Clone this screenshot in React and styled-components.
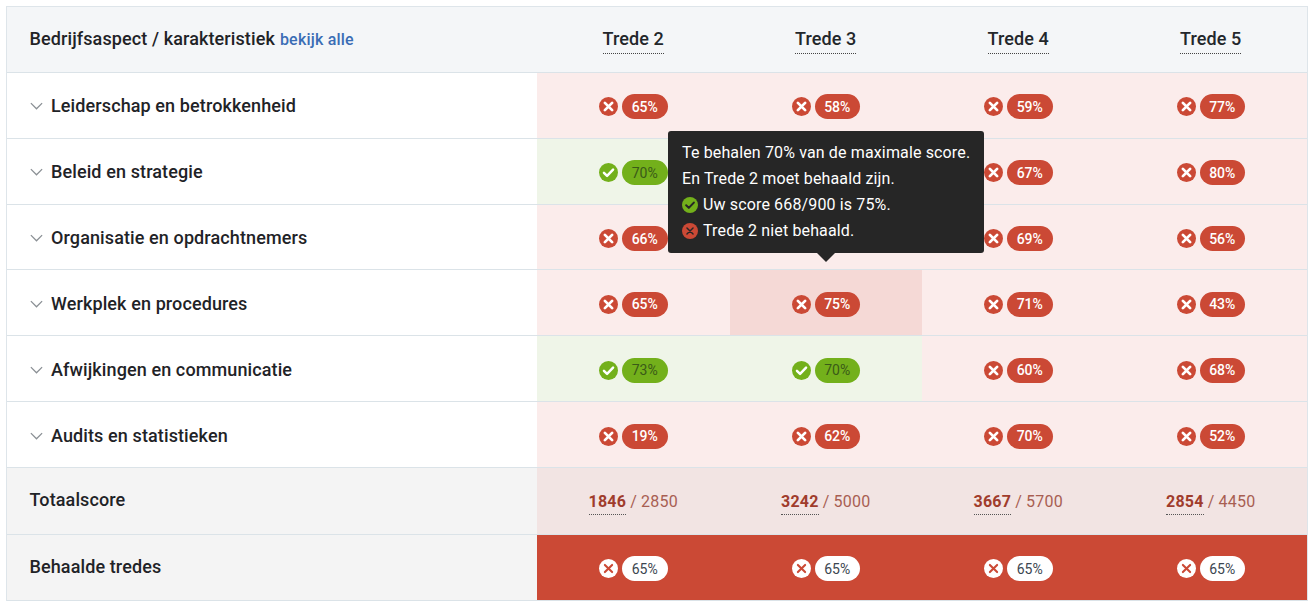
import React from "react";
import styled, { createGlobalStyle } from "styled-components";

const Global = createGlobalStyle`
  html, body { margin: 0; padding: 0; background: #fff; }
  body { font-family: Roboto, "Liberation Sans", sans-serif; color: #212529; }
`;
const Page = styled.div`
  width: 1314px; height: 608px; padding: 6px 6px 0; box-sizing: border-box; overflow: hidden;
`;
const Table = styled.div`
  width: 1302px; position: relative;
  border: 1px solid #dee5ea; border-bottom: 0; box-sizing: border-box;
  display: grid; grid-template-columns: 530px repeat(4, 192.5px);
`;
const Row = styled.div`
  display: contents;
`;
const Label = styled.div`
  height: ${p => p.$h}px; box-sizing: border-box; display: flex; align-items: center; gap: 7px;
  padding: ${p => p.$plain ? "0 0 2px 22.5px" : "1px 0 0 22px"};
  background: ${p => p.$bg || "#fff"};
  border-bottom: 1px solid #dbe3e8;
  font-size: 18px; font-weight: 500; color: #1f2327; letter-spacing: 0.11px; white-space: nowrap;
`;
const Link = styled.span`
  color: #3a6db5; font-size: 16px; font-weight: 500; letter-spacing: 0.2px; padding-top: 1px; margin-left: -2px;
`;
const Chevron = styled.svg`
  width: 15px; height: 15px; flex: none; stroke: #8a8f94; fill: none; stroke-width: 1.3;
`;
const Head = styled.div`
  height: ${p => p.$h}px; box-sizing: border-box; display: flex; align-items: center; justify-content: center;
  background: #f4f6f8; border-bottom: 1px solid #dbe3e8;
`;
const HeadTitle = styled.span`
  font-size: 18px; font-weight: 500; color: #23272b; line-height: 22px; letter-spacing: 0.1px;
  border-bottom: 1px dotted #444; padding-bottom: 3px; margin-top: 2px;
`;
const Cell = styled.div`
  height: ${p => p.$h}px; box-sizing: border-box; display: flex; align-items: center; justify-content: center; gap: 4px;
  background: ${p => p.$bg};
  border-bottom: 1px solid #dbe3e8;
  padding-top: 3px;
`;
const Pill = styled.span`
  width: 45.5px; height: 25px; border-radius: 13px; display: flex; align-items: center; justify-content: center;
  font-size: 14px; font-weight: ${p => p.$variant === "bad" ? 500 : 400};
  background: ${p => p.$variant === "bad" ? "#cb4935" : p.$variant === "ok" ? "#73b01b" : "#fff"};
  color: ${p => p.$variant === "bad" ? "#fff" : p.$variant === "ok" ? "#3a5a18" : "#3b4650"};
`;
const Score = styled.div`
  display: flex; gap: 4px; font-size: 16px; color: #a85e52; letter-spacing: 0.2px; margin-top: 2px;
`;
const Earned = styled.b`
  font-weight: 700; color: #a03c2c; border-bottom: 1px dotted #555; padding-bottom: 3px;
`;
const Tooltip = styled.div`
  position: absolute; left: 661px; top: 124px; width: 316px; height: 122px; box-sizing: border-box;
  background: #262626; border-radius: 3px; padding: 9px 14px; color: #fff;
  font-size: 16px; line-height: 26px; font-weight: 400; letter-spacing: 0.14px; z-index: 2;
  &::after {
    content: ""; position: absolute; left: 149px; bottom: -9px;
    border-left: 9px solid transparent; border-right: 9px solid transparent; border-top: 9px solid #262626;
  }
`;
const TipLine = styled.div`
  display: flex; align-items: center; gap: 5px; white-space: nowrap;
`;

const Cross = ({ bg = "#cb4935", fg = "#fff", size = 19, stroke = 2.9 }) => (
  <svg width={size} height={size} viewBox="0 0 20 20" style={{ flex: "none" }}>
    <circle cx="10" cy="10" r="10" fill={bg} />
    <path d="M6.2 6.2l7.6 7.6M13.8 6.2l-7.6 7.6" stroke={fg} strokeWidth={stroke} strokeLinecap="round" />
  </svg>
);
const Check = ({ bg = "#73b01b", fg = "#fff", size = 19 }) => (
  <svg width={size} height={size} viewBox="0 0 20 20" style={{ flex: "none" }}>
    <circle cx="10" cy="10" r="10" fill={bg} />
    <path d="M5.2 10.3l3.3 3.3 6.3-6.6" stroke={fg} strokeWidth="2.6" fill="none" strokeLinecap="round" strokeLinejoin="round" />
  </svg>
);

const RED = "#fbeceb", GREEN = "#eff5e8", RED_HOVER = "#f5d9d6";
const rows = [
  ["Leiderschap en betrokkenheid", [65, 58, 59, 77], []],
  ["Beleid en strategie", [70, null, 67, 80], [0]],
  ["Organisatie en opdrachtnemers", [66, null, 69, 56], []],
  ["Werkplek en procedures", [65, 75, 71, 43], []],
  ["Afwijkingen en communicatie", [73, 70, 60, 68], [0, 1]],
  ["Audits en statistieken", [19, 62, 70, 52], []],
];
const totals = [[1846, 2850], [3242, 5000], [3667, 5700], [2854, 4450]];
const HEAD_H = 66, ROW_H = 65.83, TOTAL_H = 67, LAST_H = 66;

export default function App() {
  return (
    <Page>
      <Global />
      <Table>
        <Row>
          <Label $plain $h={HEAD_H} $bg="#f4f6f8"><span>Bedrijfsaspect / karakteristiek</span><Link>bekijk alle</Link></Label>
          {[2, 3, 4, 5].map(n => <Head key={n} $h={HEAD_H}><HeadTitle>Trede {n}</HeadTitle></Head>)}
        </Row>
        {rows.map(([name, vals, good], r) => (
          <Row key={name}>
            <Label $h={ROW_H}>
              <Chevron viewBox="0 0 16 16"><path d="M2 5.5l6 6 6-6" /></Chevron>
              {name}
            </Label>
            {vals.map((v, c) => {
              const ok = good.includes(c);
              const bg = ok ? GREEN : r === 3 && c === 1 ? RED_HOVER : RED;
              return (
                <Cell key={c} $h={ROW_H} $bg={r === 1 && c === 1 ? GREEN : bg}>
                  {v === null ? null : ok ? <Check /> : <Cross />}
                  {v === null ? null : <Pill $variant={ok ? "ok" : "bad"}>{v}%</Pill>}
                </Cell>
              );
            })}
          </Row>
        ))}
        <Row>
          <Label $plain $h={TOTAL_H} $bg="#f4f4f4">Totaalscore</Label>
          {totals.map(([a, b]) => (
            <Cell key={a} $h={TOTAL_H} $bg="#f2e4e3">
              <Score><Earned>{a}</Earned><span>/ {b}</span></Score>
            </Cell>
          ))}
        </Row>
        <Row>
          <Label $plain $h={LAST_H} $bg="#f4f4f4">Behaalde tredes</Label>
          {[0, 1, 2, 3].map(i => (
            <Cell key={i} $h={LAST_H} $bg="#cb4935">
              <Cross bg="#fff" fg="#cb4935" stroke={2.2} />
              <Pill $variant="plain">65%</Pill>
            </Cell>
          ))}
        </Row>
        <Tooltip>
          <TipLine>Te behalen 70% van de maximale score.</TipLine>
          <TipLine>En Trede 2 moet behaald zijn.</TipLine>
          <TipLine><Check size={16} fg="#262626" />Uw score 668/900 is 75%.</TipLine>
          <TipLine><Cross size={16} fg="#262626" stroke={1.8} />Trede 2 niet behaald.</TipLine>
        </Tooltip>
      </Table>
    </Page>
  );
}
